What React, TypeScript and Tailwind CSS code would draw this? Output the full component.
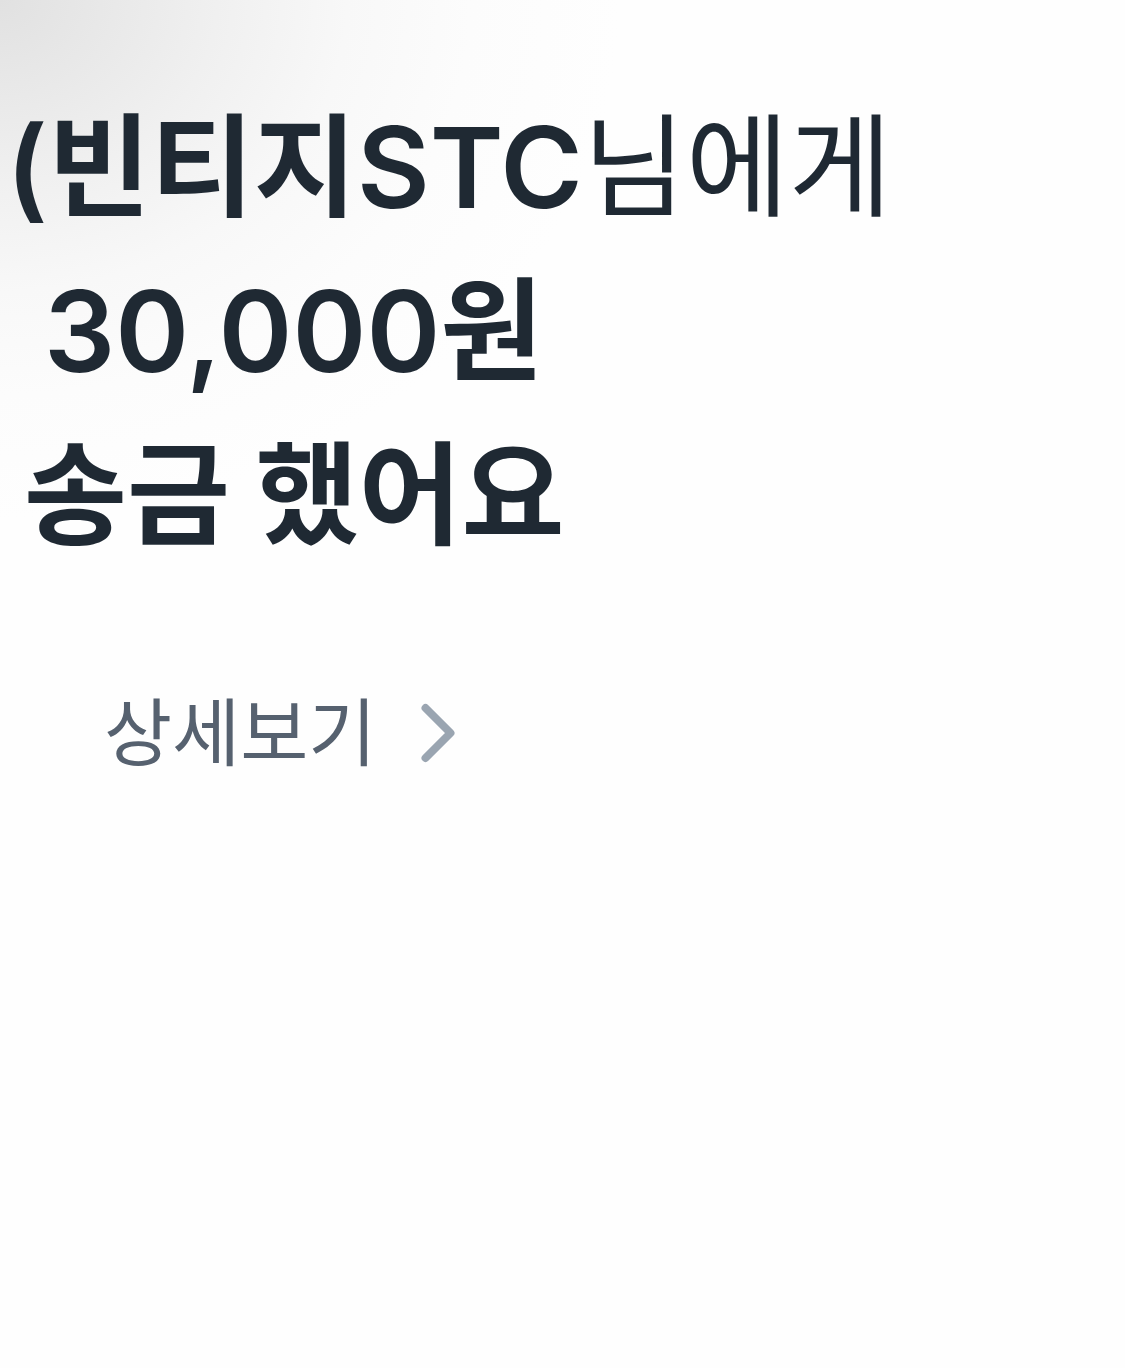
import React from 'react';
import { ChevronRight } from 'lucide-react';

const RECEIVER = '(빈티지STC';
const AMOUNT = '30,000원';

const App: React.FC = () => {
  return (
    <main className="min-h-screen overflow-hidden bg-[#fefefe] bg-[radial-gradient(ellipse_620px_520px_at_0_0,#e1e1e1_0%,#f0f0f0_35%,#f8f8f8_56%,#fcfcfc_76%,#fefefe_100%)] font-['Inter','Noto_Sans_CJK_KR',sans-serif]">
      <section className="pt-[85px]">
        <h1 className="text-[112px] leading-[164px] font-semibold text-[#1f2933] whitespace-nowrap">
          <span className="block pl-1.5">
            {RECEIVER}
            <span className="font-normal">님에게</span>
          </span>
          <span className="block pl-11">{AMOUNT}</span>
          <span className="block pl-6">
            <span className="font-['Noto_Sans_CJK_KR',sans-serif] leading-none">송금 했어요</span>
          </span>
        </h1>

        <a href="#detail" className="mt-[78px] ml-[104px] flex w-fit items-center gap-3 text-[74px] leading-[156px] text-[#56616f]">
          상세보기
          <ChevronRight size={100} strokeWidth={1.9} className="text-[#9aa5b1]" />
        </a>
      </section>
    </main>
  );
};

export default App;
